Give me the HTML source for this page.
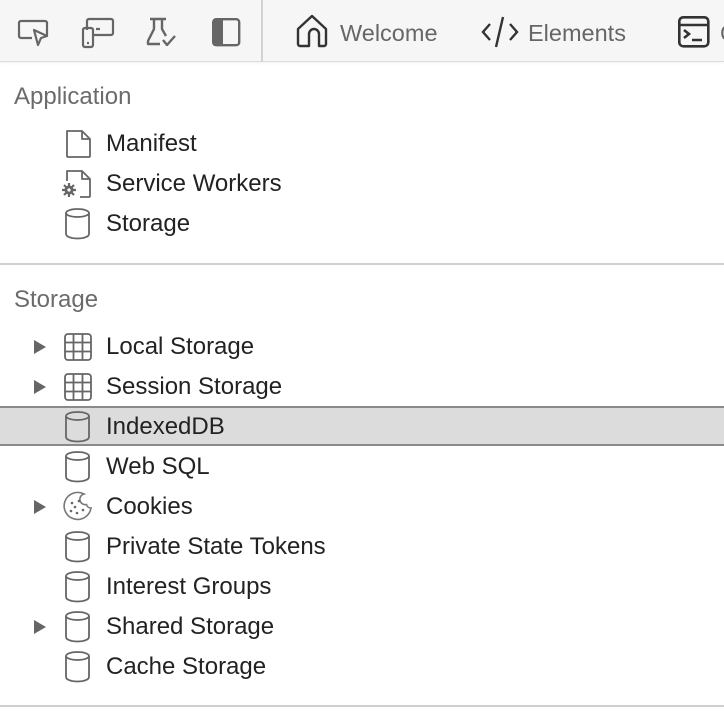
<!DOCTYPE html>
<html><head><meta charset="utf-8"><style>
*{margin:0;padding:0;box-sizing:border-box}
body{width:724px;height:718px;overflow:hidden;background:#fff;font-family:"Liberation Sans",Helvetica,sans-serif;position:relative}
.tb{position:absolute;left:0;top:0;width:724px;height:62px;background:#f6f6f6;border-bottom:1px solid #dcdcdc;box-shadow:0 1px 3px rgba(0,0,0,.06)}
.sep{position:absolute;left:261px;top:0;width:2px;height:62px;background:#d0d3d6}
.t{position:absolute;font-size:23px;line-height:28px;white-space:nowrap}
.h{color:#6b6b6b;font-size:24px}
.i{color:#222;left:106px;font-size:24px}
.tab{color:#666}
svg{position:absolute;overflow:visible}
.hr{position:absolute;left:0;width:724px;height:2px;background:#cfcfcf}
.sel{position:absolute;left:0;top:406px;width:724px;height:40px;background:#dcdcdc;border-top:2px solid #8a8a8a;border-bottom:2px solid #8a8a8a}
.tri{position:absolute;left:34px;width:0;height:0;border-top:7px solid transparent;border-bottom:7px solid transparent;border-left:12px solid #666}
</style></head><body>
<div class="tb"></div>
<div class="sep"></div>
<svg style="left:18px;top:19px" width="32" height="30" fill="none" stroke="#666" stroke-width="2.2"><path d="M14 19H3a2 2 0 0 1-2-2V4a2 2 0 0 1 2-2h24a2 2 0 0 1 2 2v13"/><path d="M16 11l13 6-6 2-3 7z" stroke-linejoin="round"/></svg>
<svg style="left:82px;top:18px" width="34" height="30" fill="none" stroke="#666" stroke-width="2.2"><rect x="1" y="10" width="10" height="19" rx="2"/><path d="M5 12V3a2 2 0 0 1 2-2h22a2 2 0 0 1 2 2v12a2 2 0 0 1-2 2H12"/><path d="M14 11h4M5 25h2"/></svg>
<svg style="left:147px;top:17px" width="34" height="32" fill="none" stroke="#666" stroke-width="2.4" stroke-linejoin="round"><path d="M3 2h16M7 2v10L1 24v3h12M15 2v10l4 7"/><path d="M16 23l4 5 8-9"/></svg>
<svg style="left:212px;top:18px" width="30" height="30"><rect x="1.2" y="1.2" width="26" height="26" rx="3" fill="none" stroke="#666" stroke-width="2.4"/><rect x="1" y="1" width="10" height="27" rx="2" fill="#666"/></svg>
<svg style="left:296px;top:15px" width="34" height="34" fill="none" stroke="#333" stroke-width="2.4" stroke-linejoin="round"><path d="M2 14L16 1l14 13v15a2 2 0 0 1-2 2h-5V19a5 5 0 0 0-10 0v12H4a2 2 0 0 1-2-2z"/></svg>
<div class="t tab" style="left:340px;top:19px;font-size:23.5px">Welcome</div>
<svg style="left:481px;top:16px" width="38" height="32" fill="none" stroke="#333" stroke-width="2.4"><path d="M9 8L2 16l7 8M29 8l7 8-7 8M22 1l-7 30"/></svg>
<div class="t tab" style="left:528px;top:19px;font-size:23.5px">Elements</div>
<svg style="left:678px;top:16px" width="32" height="32" fill="none" stroke="#333" stroke-width="2.6"><rect x="1.3" y="1.3" width="29" height="29" rx="4"/><path d="M1 9h30M6 14l5 4-5 4M14 24h10"/></svg>
<div class="t tab" style="left:720px;top:19px">C</div>

<div class="t h" style="left:14px;top:83px">Application</div>
<svg style="left:66px;top:129px" width="26" height="30" fill="none" stroke="#666" stroke-width="1.8" stroke-linejoin="round"><path d="M1 2h15l8 8v17a1 1 0 0 1-1 1H2a1 1 0 0 1-1-1z M16 2v8h8"/></svg>
<div class="t i" style="top:130px">Manifest</div>
<svg style="left:58px;top:169px" width="34" height="30" fill="none" stroke="#666" stroke-width="1.8" stroke-linejoin="round"><path d="M9 12V2h15l8 8v17a1 1 0 0 1-1 1H22 M24 2v8h8"/><circle cx="11" cy="21" r="4.5" fill="#666" stroke="none"/><path d="M11 14v14M4 21h14M6 16l10 10M16 16L6 26" stroke-width="2.2"/><circle cx="11" cy="21" r="1.6" fill="#fff" stroke="none"/></svg>
<div class="t i" style="top:170px">Service Workers</div>
<svg style="left:65px;top:208px" width="26" height="32" fill="none" stroke="#666" stroke-width="1.8"><ellipse cx="12.5" cy="5" rx="11.5" ry="4"/><path d="M1 5v21c0 2.5 5 4.5 11.5 4.5S24 28.5 24 26V5"/></svg>
<div class="t i" style="top:210px">Storage</div>
<div class="hr" style="top:263px"></div>

<div class="t h" style="left:14px;top:286px">Storage</div>
<div class="tri" style="top:340px"></div>
<svg style="left:64px;top:333px" width="28" height="28" fill="none" stroke="#666" stroke-width="1.8"><rect x="1" y="1" width="26" height="26" rx="3"/><path d="M1 9.5h26M1 18.5h26M9.5 1v26M18.5 1v26"/></svg>
<div class="t i" style="top:333px">Local Storage</div>
<div class="tri" style="top:380px"></div>
<svg style="left:64px;top:373px" width="28" height="28" fill="none" stroke="#666" stroke-width="1.8"><rect x="1" y="1" width="26" height="26" rx="3"/><path d="M1 9.5h26M1 18.5h26M9.5 1v26M18.5 1v26"/></svg>
<div class="t i" style="top:373px">Session Storage</div>
<div class="sel"></div>
<svg style="left:65px;top:411px" width="26" height="32" fill="none" stroke="#666" stroke-width="1.8"><ellipse cx="12.5" cy="5" rx="11.5" ry="4"/><path d="M1 5v21c0 2.5 5 4.5 11.5 4.5S24 28.5 24 26V5"/></svg>
<div class="t i" style="top:413px">IndexedDB</div>
<svg style="left:65px;top:451px" width="26" height="32" fill="none" stroke="#666" stroke-width="1.8"><ellipse cx="12.5" cy="5" rx="11.5" ry="4"/><path d="M1 5v21c0 2.5 5 4.5 11.5 4.5S24 28.5 24 26V5"/></svg>
<div class="t i" style="top:453px">Web SQL</div>
<div class="tri" style="top:500px"></div>
<svg style="left:63px;top:492px" width="30" height="30" fill="none" stroke="#777" stroke-width="1.6"><path d="M21 2A13.5 13.5 0 1 0 28 16a4.5 4.5 0 0 1-4.5-3.5 4.5 4.5 0 0 1-2.5-10.5z"/><g fill="#666" stroke="none"><circle cx="9" cy="11" r="1.3"/><circle cx="16" cy="9" r="1.3"/><circle cx="12" cy="15" r="1.3"/><circle cx="8" cy="19" r="1.3"/><circle cx="14" cy="21" r="1.3"/><circle cx="20" cy="18" r="1.3"/></g></svg>
<div class="t i" style="top:493px">Cookies</div>
<svg style="left:65px;top:531px" width="26" height="32" fill="none" stroke="#666" stroke-width="1.8"><ellipse cx="12.5" cy="5" rx="11.5" ry="4"/><path d="M1 5v21c0 2.5 5 4.5 11.5 4.5S24 28.5 24 26V5"/></svg>
<div class="t i" style="top:533px">Private State Tokens</div>
<svg style="left:65px;top:571px" width="26" height="32" fill="none" stroke="#666" stroke-width="1.8"><ellipse cx="12.5" cy="5" rx="11.5" ry="4"/><path d="M1 5v21c0 2.5 5 4.5 11.5 4.5S24 28.5 24 26V5"/></svg>
<div class="t i" style="top:573px">Interest Groups</div>
<div class="tri" style="top:620px"></div>
<svg style="left:65px;top:611px" width="26" height="32" fill="none" stroke="#666" stroke-width="1.8"><ellipse cx="12.5" cy="5" rx="11.5" ry="4"/><path d="M1 5v21c0 2.5 5 4.5 11.5 4.5S24 28.5 24 26V5"/></svg>
<div class="t i" style="top:613px">Shared Storage</div>
<svg style="left:65px;top:651px" width="26" height="32" fill="none" stroke="#666" stroke-width="1.8"><ellipse cx="12.5" cy="5" rx="11.5" ry="4"/><path d="M1 5v21c0 2.5 5 4.5 11.5 4.5S24 28.5 24 26V5"/></svg>
<div class="t i" style="top:653px">Cache Storage</div>
<div class="hr" style="top:705px"></div>
</body></html>
